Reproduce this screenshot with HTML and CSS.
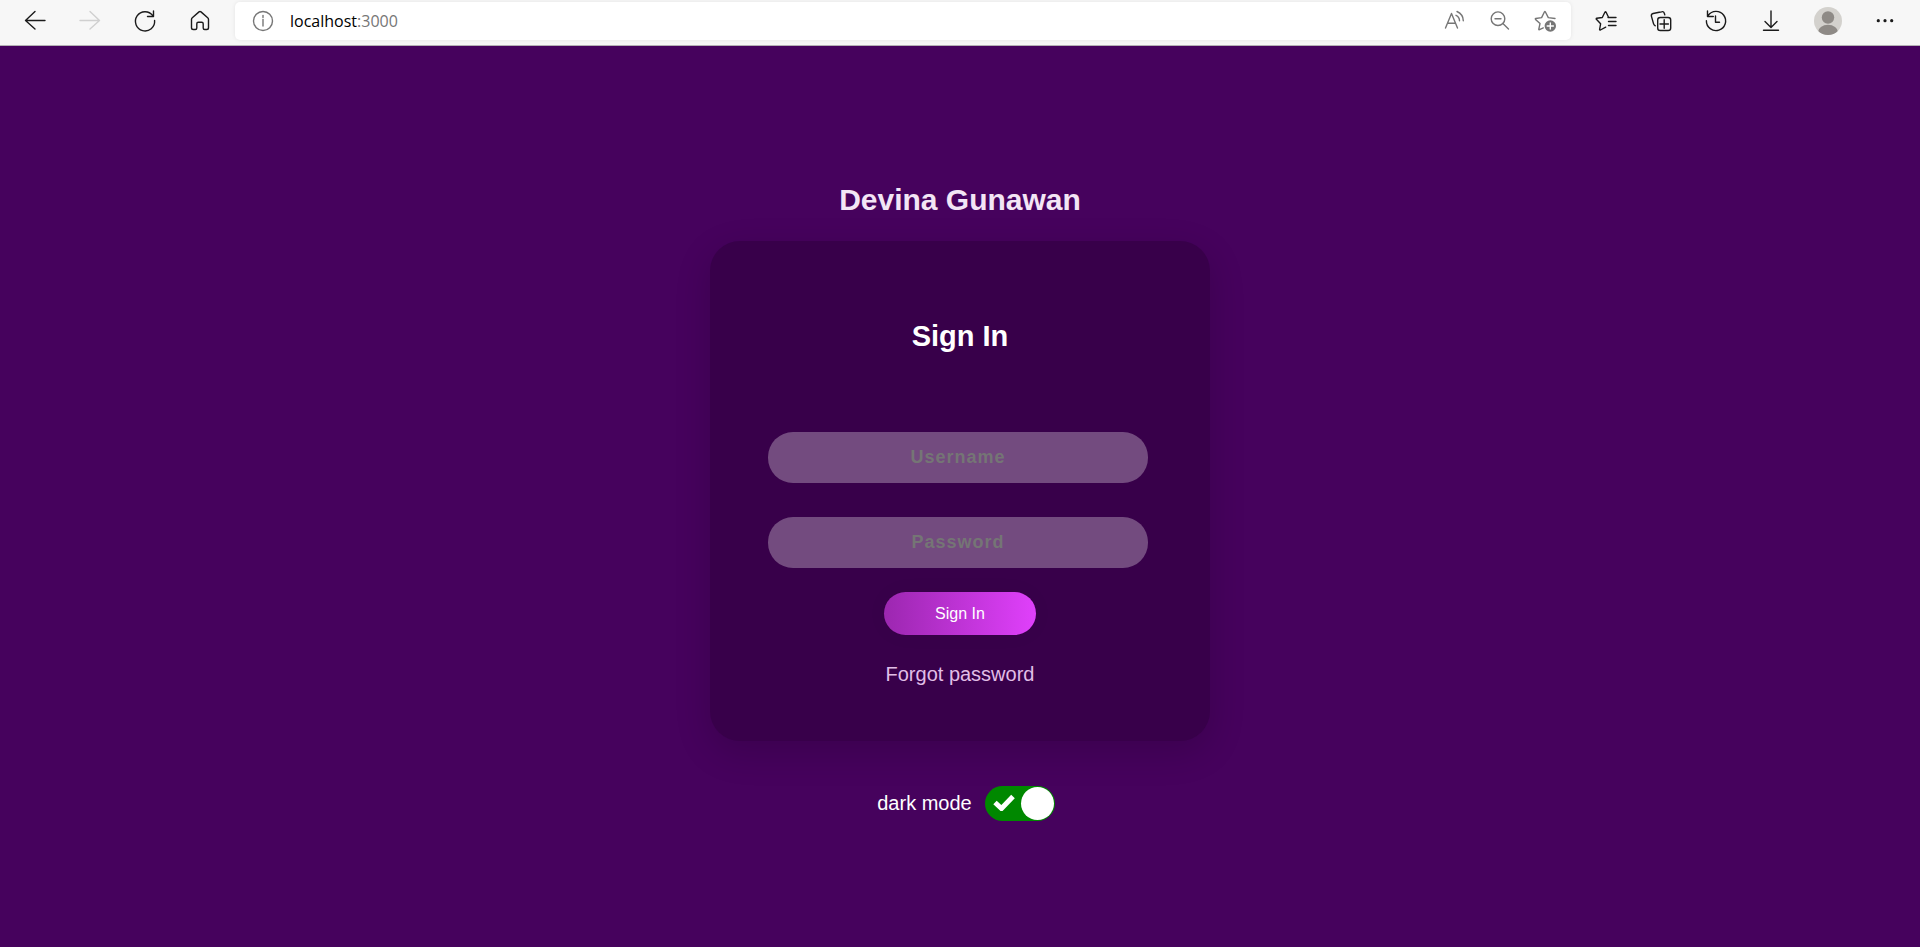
FILE: index.html
```html
<!DOCTYPE html>
<html lang="en">
<head>
  <meta charset="utf-8">
  <meta name="viewport" content="width=device-width, initial-scale=1">
  <title>Sign In</title>
  <link rel="stylesheet" href="styles.css">
</head>
<body>
  <header class="toolbar">
    <nav class="toolbar-group" aria-label="Navigation">
      <button class="icon-button" type="button" aria-label="Back">
        <svg class="icon" viewBox="0 0 24 24"><path d="M22 11.500H2.500M12 2.500l-9.500 9L12 20"/></svg>
      </button>
      <button class="icon-button icon-button-disabled" type="button" aria-label="Forward" disabled>
        <svg class="icon" viewBox="0 0 24 24"><path d="M2 11.500H21.500M12 2.500l9.500 9L12 20"/></svg>
      </button>
      <button class="icon-button" type="button" aria-label="Refresh">
        <svg class="icon" viewBox="0 0 24 24"><path d="M21.600 11.500A9.600 9.600 0 1 1 19.800 6.700M20.500 2v5.500h-6"/></svg>
      </button>
      <button class="icon-button" type="button" aria-label="Home">
        <svg class="icon" viewBox="0 0 24 24"><path d="M3.500 10.500q0-1 .8-1.700L11 2.900q1-.8 2 0l6.700 5.900q.8.700.8 1.700v8.200q0 1.800-1.800 1.800h-2q-1.500 0-1.500-1.500v-4.200q0-1.500-1.500-1.500h-3.400q-1.500 0-1.500 1.500V19q0 1.500-1.500 1.500h-2q-1.800 0-1.800-1.800z"/></svg>
      </button>
    </nav>

    <div class="address-bar">
      <button class="icon-button icon-button-muted" type="button" aria-label="View site information">
        <svg class="icon" viewBox="0 0 24 24"><circle cx="12" cy="12" r="9.500"/><path d="M12 10.500V17"/><path d="M12 6.500v2"/></svg>
      </button>
      <span class="address">localhost<span class="address-port">:3000</span></span>
      <div class="address-actions">
        <button class="icon-button icon-button-muted" type="button" aria-label="Read aloud">
          <svg class="icon" viewBox="0 0 24 24"><path d="M3.500 19 9.500 4.500 15.500 19M5.500 14.300h8M14 6.300q3.500 1.700 3.500 5.400M15 2.500q6.300 3 6.300 9.200"/></svg>
        </button>
        <button class="icon-button icon-button-muted" type="button" aria-label="Zoom out">
          <svg class="icon" viewBox="0 0 24 24"><circle cx="10" cy="9.700" r="6.800"/><path d="M7 9.700h6M14.900 14.600l5.600 5.400"/></svg>
        </button>
        <button class="icon-button icon-button-muted" type="button" aria-label="Add to favorites">
          <svg class="icon" viewBox="0 0 24 24"><path d="M21 9.500l-6.700-.9-3-5.800q-.4-.6-.8 0l-2.900 5.800-5.800.9q-.8.200-.3.900l4.500 4.200-1.200 5.600q0 .8.700.5l3.800-1.800"/><circle class="icon-solid" cx="16.300" cy="17" r="5.700"/><path class="icon-cutout" d="M13.200 17h6.200M16.300 13.900v6.200"/></svg>
        </button>
      </div>
    </div>

    <div class="toolbar-group">
      <button class="icon-button" type="button" aria-label="Favorites">
        <svg class="icon" viewBox="0 0 24 24"><path d="M14.500 8.200 12 3q-.5-.8-1 0L8.300 8.500l-5.500.8q-1 .2-.4 1l4.200 4.500-1 5.700q0 .8.800.5l5.300-2.800M14 8.500h8M14.500 12.500H22M14.500 16.500H22"/></svg>
      </button>
      <button class="icon-button" type="button" aria-label="Collections">
        <svg class="icon" viewBox="0 0 24 24"><rect x="8.700" y="8.500" width="13" height="13" rx="2.600"/><path d="M15.200 10.800v8.400M11 15h8.400M15.800 5.900l-.5-1.700q-.6-2-2.600-1.500L4.100 4.500Q2 5 2.400 7.100l2.100 7.500q.4 1.500 1.800 2.200"/></svg>
      </button>
      <button class="icon-button" type="button" aria-label="History">
        <svg class="icon" viewBox="0 0 24 24"><path d="M2.400 11.700A9.600 9.600 0 1 0 4.100 6.500M3.500 2v5.500h5.800M11.500 7v6.300h4"/></svg>
      </button>
      <button class="icon-button" type="button" aria-label="Downloads">
        <svg class="icon" viewBox="0 0 24 24"><path d="M12 2v16M6 12.500l6 6 6-6M4.500 21.200h15"/></svg>
      </button>
      <button class="icon-button" type="button" aria-label="Profile">
        <svg class="avatar" viewBox="0 0 28 28"><defs><clipPath id="avatar-clip"><circle cx="14" cy="14" r="14"/></clipPath></defs><g clip-path="url(#avatar-clip)"><rect class="avatar-back" width="28" height="28"/><circle cx="14" cy="10.500" r="6.200"/><ellipse cx="14" cy="25" rx="10" ry="7.200"/></g></svg>
      </button>
      <button class="icon-button" type="button" aria-label="Settings and more">
        <svg class="icon" viewBox="0 0 24 24"><g class="icon-solid"><circle cx="5.300" cy="11.700" r="1.600"/><circle cx="12" cy="11.700" r="1.600"/><circle cx="18.700" cy="11.700" r="1.600"/></g></svg>
      </button>
    </div>
  </header>

  <main class="page">
    <h1 class="page-title">Devina Gunawan</h1>

    <form class="card">
      <h2 class="card-title">Sign In</h2>
      <div class="fields">
        <input class="field" type="text" placeholder="Username" aria-label="Username" autocomplete="username">
        <input class="field" type="password" placeholder="Password" aria-label="Password" autocomplete="current-password">
      </div>
      <button class="submit" type="button">Sign In</button>
      <a class="forgot" href="#forgot">Forgot password</a>
    </form>

    <label class="mode">
      <span>dark mode</span>
      <span class="switch">
        <input class="switch-input" type="checkbox" role="switch" checked>
        <svg class="switch-check" viewBox="0 0 22 17"><path d="M2 8.500l6.500 6L20 2.500"/></svg>
        <span class="switch-knob"></span>
      </span>
    </label>
  </main>
</body>
</html>
```

FILE: styles.css
```css
* {
  box-sizing: border-box;
}

body {
  display: flex;
  flex-direction: column;
  min-height: 100vh;
  margin: 0;
  background: #46025d;
  color: #fff;
  font-family: "Liberation Sans", Arial, sans-serif;
}

/* Browser toolbar */

.toolbar {
  display: flex;
  align-items: center;
  gap: 23px;
  padding: 2px 23px 5px;
  border-bottom: 1px solid #b4b1b5;
  background: #f7f7f7;
  color: #1b1b1b;
}

.toolbar-group {
  display: flex;
  align-items: center;
  gap: 31px;
}

.icon-button {
  display: flex;
  padding: 0;
  border: 0;
  background: none;
  color: inherit;
}

.icon-button-muted {
  color: #767676;
}

.icon-button-disabled {
  color: #d0d0d0;
}

.icon {
  width: 24px;
  height: 24px;
  fill: none;
  stroke: currentColor;
  stroke-width: 1.4;
  stroke-linecap: round;
  stroke-linejoin: round;
}

.icon-solid {
  fill: currentColor;
  stroke: none;
}

.icon-cutout {
  stroke: #fff;
}

.avatar {
  width: 28px;
  height: 28px;
  fill: #8e8a86;
}

.avatar-back {
  fill: #d3d1cd;
}

.address-bar {
  display: flex;
  flex: 1;
  align-items: center;
  gap: 15px;
  height: 38px;
  padding: 0 13px 0 16px;
  border-radius: 5px;
  background: #fff;
  box-shadow: 0 0 4px rgba(0, 0, 0, 0.08);
}

.address {
  flex: 1;
  color: #000;
  font-family: "Open Sans", "Noto Sans", sans-serif;
  font-size: 16px;
  line-height: 24px;
}

.address-port {
  color: #767676;
}

.address-actions {
  display: flex;
  gap: 22px;
}

/* Sign-in page */

.page {
  display: flex;
  flex: 1;
  flex-direction: column;
  align-items: center;
  padding: 136px 16px 32px;
}

.page-title {
  margin: 0 0 24px;
  color: #f3e5f5;
  font-size: 30px;
  line-height: 35px;
}

.card {
  display: flex;
  flex-direction: column;
  align-items: center;
  width: 100%;
  max-width: 500px;
  padding: 78px 58px 53px;
  border-radius: 30px;
  background: #38004a;
  box-shadow: 0 11px 35px 2px rgba(0, 0, 0, 0.14);
}

.card-title {
  margin: 0 0 79px;
  font-size: 29px;
  line-height: 34px;
}

.fields {
  display: flex;
  flex-direction: column;
  gap: 34px;
  width: 100%;
  padding-right: 4px;
}

.field {
  width: 100%;
  height: 51px;
  padding: 0 20px;
  border: 0;
  border-radius: 25px;
  outline: 0;
  background: #734b7f;
  color: #fff;
  font-family: inherit;
  font-size: 18px;
  font-weight: bold;
  letter-spacing: 1px;
  text-align: center;
}

.field::placeholder {
  color: #757575;
  opacity: 1;
}

.submit {
  height: 43px;
  margin: 24px 0 25px;
  padding: 0 51px;
  border: 0;
  border-radius: 22px;
  background: linear-gradient(to right, #9c27b0, #e040fb);
  box-shadow: 0 0 20px 1px rgba(0, 0, 0, 0.04);
  color: #fff;
  font-family: inherit;
  font-size: 16px;
}

.forgot {
  color: #e1bee7;
  font-size: 20px;
  line-height: 28px;
  text-decoration: none;
}

.mode {
  display: flex;
  align-items: center;
  gap: 13px;
  margin-top: 45px;
  padding-left: 12px;
  font-size: 20px;
}

.switch {
  position: relative;
  display: flex;
}

.switch-input {
  width: 70px;
  height: 35px;
  margin: 0;
  border-radius: 18px;
  appearance: none;
  background: #888;
}

.switch-input:checked {
  background: #080;
}

.switch-check {
  position: absolute;
  top: 8px;
  left: 8px;
  width: 22px;
  height: 17px;
  fill: none;
  stroke: #fff;
  stroke-width: 5;
}

.switch-knob {
  position: absolute;
  top: 1px;
  right: 1px;
  width: 33px;
  height: 33px;
  border-radius: 50%;
  background: #fff;
}
```
